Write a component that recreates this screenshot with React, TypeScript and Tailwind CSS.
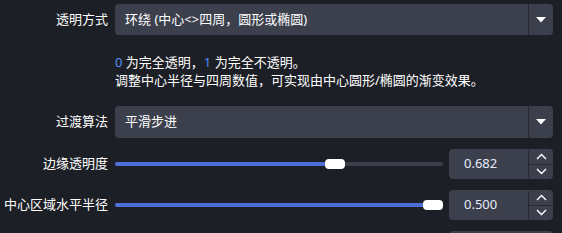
import React from "react";

const FONT = {
  fontFamily: '"Noto Sans", "Noto Sans CJK SC", sans-serif',
};

function Combo({ text, className = "" }: { text: string; className?: string }) {
  return (
    <div className={`flex h-[31px] items-stretch rounded-[4px] bg-[#3c404d] ${className}`}>
      <div className="flex flex-1 items-center pl-[10px] text-white">{text}</div>
      <div className="w-px self-stretch bg-[#262932]" />
      <div className="flex w-[24px] items-center justify-center">
        <svg width="10" height="6" viewBox="0 0 10 6">
          <polygon points="0,0 10,0 5,5.5" fill="#ffffff" />
        </svg>
      </div>
    </div>
  );
}

function Chevron({ up }: { up?: boolean }) {
  return (
    <svg width="11" height="7" viewBox="0 0 11 7">
      <polyline
        points={up ? "1,6 5.5,1.5 10,6" : "1,1 5.5,5.5 10,1"}
        fill="none"
        stroke="#ffffff"
        strokeWidth="1.4"
      />
    </svg>
  );
}

function SpinBox({ value }: { value: string }) {
  return (
    <div className="flex h-[30px] w-[104px] shrink-0 items-stretch rounded-[4px] bg-[#3c404d]">
      <div className="flex flex-1 items-center pl-[15px] text-[#e6ecfa]">{value}</div>
      <div className="w-px self-stretch my-[1px] bg-[#262932]" />
      <div className="flex w-[24px] flex-col">
        <div className="flex flex-1 items-center justify-center">
          <Chevron up />
        </div>
        <div className="h-px bg-[#262932]" />
        <div className="flex flex-1 items-center justify-center">
          <Chevron />
        </div>
      </div>
    </div>
  );
}

function Slider({ frac }: { frac: number }) {
  return (
    <div className="relative flex h-[10px] flex-1 items-center">
      <div className="h-[4px] w-full rounded-full bg-[#3c404d]" />
      <div
        className="absolute left-0 h-[4px] rounded-full bg-[#4b6fd6]"
        style={{ width: `calc((100% - 20px) * ${frac} + 10px)` }}
      />
      <div
        className="absolute top-0 h-[10px] w-[20px] rounded-[4px] bg-white"
        style={{ left: `calc((100% - 20px) * ${frac})` }}
      />
    </div>
  );
}

function Label({ text, className = "" }: { text: string; className?: string }) {
  return (
    <div className={`flex items-center justify-end whitespace-nowrap text-white ${className}`}>
      {text}
    </div>
  );
}

export default function App() {
  return (
    <div className="h-[233px] overflow-hidden bg-[#1d1f26] text-[13px]" style={FONT}>
      <div className="grid grid-cols-[108px_1fr] gap-x-[7px] pr-[9px] pt-[4px]">
        <Label text="透明方式" />
        <Combo text="环绕 (中心<>四周，圆形或椭圆)" />

        <div />
        <div className="mt-[18px] leading-[18px] text-white">
          <div>
            <span className="text-[#4f8ff7]">0</span> 为完全透明，
            <span className="text-[#4f8ff7]">1</span> 为完全不透明。
          </div>
          <div>调整中心半径与四周数值，可实现由中心圆形/椭圆的渐变效果。</div>
        </div>

        <Label text="过渡算法" className="mt-[17px]" />
        <Combo text="平滑步进" className="mt-[17px] h-[32px]" />

        <Label text="边缘透明度" className="mt-[11px]" />
        <div className="mt-[11px] flex items-center gap-[6px]">
          <Slider frac={0.682} />
          <SpinBox value="0.682" />
        </div>

        <Label text="中心区域水平半径" className="mt-[11px]" />
        <div className="mt-[11px] flex items-center gap-[6px]">
          <Slider frac={1} />
          <SpinBox value="0.500" />
        </div>

        <div />
        <div className="mt-[11px] flex justify-end">
          <div className="h-[30px] w-[104px] rounded-[4px] bg-[#3c404d]" />
        </div>
      </div>
    </div>
  );
}
